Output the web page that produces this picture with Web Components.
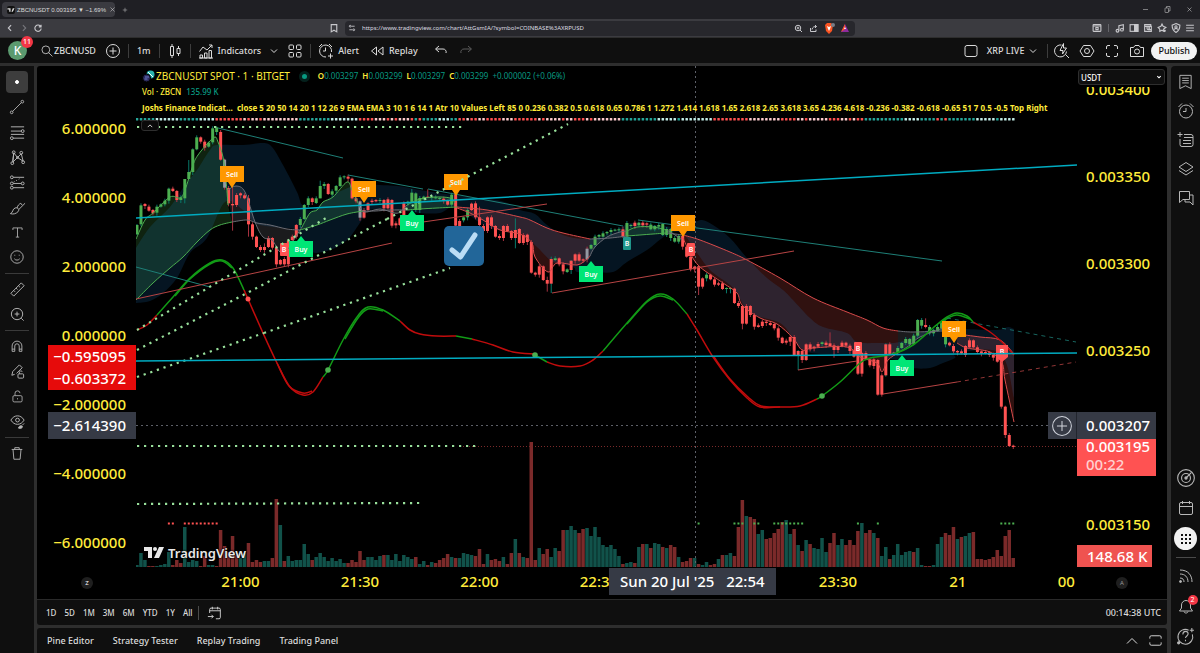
<!DOCTYPE html>
<html lang="en">
<head>
<meta charset="utf-8">
<title>ZBCNUSDT 0.003195 ▼ −1.69%</title>
<style>
	html, body {height: 100%;}
	body {
		margin: 0;
		overflow: hidden;
		background: #2e2e2e;
		color: #dbdbdb;
		font-family: "Noto Sans", "Open Sans", sans-serif;
		font-size: 9px;
	}
</style>
</head>
<body>
<trading-app>
	<browser-tabs slot="tabs"></browser-tabs>
	<address-bar slot="address"></address-bar>
	<chart-header slot="header"></chart-header>
	<tool-rail slot="tools"></tool-rail>
	<price-chart slot="chart">
		<chart-legend></chart-legend>
	</price-chart>
	<range-bar slot="ranges"></range-bar>
	<panel-bar slot="panels"></panel-bar>
	<side-rail slot="side"></side-rail>
</trading-app>

<script>
// every icon lives in an 18x18 box and is stroked with currentColor
const ICONS = {
	back: '<path d="M11 4L6 9l5 5"/>',
	forward: '<path d="M7 4l5 5-5 5"/>',
	reload: '<path d="M14 6.5A5.7 5.7 0 1 0 14.7 10M14.5 3v4h-4"/>',
	close: '<path d="M5 5l8 8M13 5l-8 8"/>',
	plus: '<path d="M9 4v10M4 9h10"/>',
	minimize: '<path d="M4 9h10"/>',
	restore: '<rect x="4" y="6" width="7" height="9" rx="1"/><path d="M7 6V3h7v9h-3"/>',
	bookmark: '<path d="M4 3h10v13l-5-3-5 3z"/>',
	tune: '<path d="M8 5h7M3 13h7"/><circle cx="5" cy="5" r="2"/><circle cx="13" cy="13" r="2"/>',
	zoom: '<circle cx="8" cy="8" r="5.5"/><path d="M12 12l4 4M8 5.5v5M5.500 8h5"/>',
	share: '<path d="M3 8v7h11v-4M6 11c1-5 4-6 9-6M12 2l3 3-3 3"/>',
	install: '<rect x="2" y="3" width="14" height="12" rx="1"/><path d="M2 5.500h14M7 8h4v4H7z"/>',
	note: '<circle cx="4.500" cy="14" r="2.500"/><circle cx="12.500" cy="12" r="2.500"/><path d="M7 14V5l8-2v9"/>',
	panel: '<rect x="2" y="3" width="14" height="12"/><path d="M10 3h6v12h-6z" fill="currentColor"/>',
	wallet: '<path d="M14 6V3H3v12h12v-3M3 6h12v6h-5a3 3 0 0 1 0-6"/><circle cx="11" cy="9" r=".8"/>',
	leo: '<path d="M9 2l2 4 5 2-4 3v4l-3-2-4 2v-4L2 8l5-2zM14 12v4M12 14h4"/>',
	shield: '<path d="M9 1l7 3c0 7-2 10-7 13C4 14 2 11 2 4z"/><circle cx="9" cy="7" r="2"/><path d="M6 12c1-3 5-3 6 0"/>',
	menu: '<path d="M2 4h14M2 9h14M2 14h14"/>',
	search: '<circle cx="7.500" cy="7.500" r="5"/><path d="M11 11l5 5"/>',
	addCircle: '<circle cx="9" cy="9" r="6.500"/><path d="M9 5.500v7M5.500 9h7"/>',
	candles: '<path d="M4.500 4.500h3v9h-3zM6 2v2.500M6 13.500V16M11 6.500h3v5h-3zM12.500 4v2.500M12.500 11.500V14"/>',
	indicators: '<path d="M3 16v-3h2.500v3zM7.500 16v-5H10v5zM12 16V8.500h2.500V16zM2 16h14M2.500 9.500L6 5l4 3 5-5M12 3h3v3"/>',
	chevron: '<path d="M6 7.500l3 3 3-3"/>',
	chevronUp: '<path d="M4 11.500l5-5 5 5"/>',
	grid: '<rect x="3" y="3" width="4.500" height="4.500" rx="1"/><rect x="10.500" y="3" width="4.500" height="4.500" rx="1"/><rect x="3" y="10.500" width="4.500" height="4.500" rx="1"/><rect x="10.500" y="10.500" width="4.500" height="4.500" rx="1"/>',
	alertAdd: '<path d="M14.500 10A6 6 0 1 0 9 15M8.500 5.500V9H6M2 5l3-3M12 2l3 3M13.500 11.500v5M11 14h5"/>',
	replay: '<path d="M8.500 5v8L3.500 9zM15 5v8L10 9z"/>',
	undo: '<path d="M7 4L3.500 7 7 10M4 7h7a3 3 0 0 1 3 4"/>',
	redo: '<path d="M11 4l3.500 3-3.500 3M14 7H7a3 3 0 0 0-3 4"/>',
	square: '<rect x="3" y="3.500" width="12" height="11" rx="2"/>',
	quick: '<path d="M8.500 3A6 6 0 1 0 13.500 9.500M12.500 12.500L16 16M10.500 1.500L7 8.500h3L9.500 12l4-6h-3z"/>',
	settings: '<path d="M5.500 3.500h7L16 9l-3.500 5.500h-7L2 9z"/><circle cx="9" cy="9" r="2.500"/>',
	fullscreen: '<path d="M3.500 7V5a1.500 1.500 0 0 1 1.500-1.500h2M11 3.500h2A1.500 1.500 0 0 1 14.500 5v2M14.500 11v2a1.500 1.500 0 0 1-1.500 1.500h-2M7 14.500H5A1.500 1.500 0 0 1 3.500 13v-2"/>',
	camera: '<path d="M2.500 5.500h3l1.500-2h4l1.500 2h3v9h-13z"/><circle cx="9" cy="9.500" r="2.500"/>',
	dot: '<circle cx="9" cy="9" r="1.500" fill="currentColor"/>',
	trend: '<path d="M4 14L14 4"/><circle cx="3" cy="15" r="1.500"/><circle cx="15" cy="3" r="1.500"/>',
	fib: '<path d="M2 3h14M2 7.500h11M2 11h14M4.500 15H16"/><circle cx="14.500" cy="7.500" r="1.500"/><circle cx="3" cy="15" r="1.500"/>',
	pattern: '<path d="M4 14L5 4l4 5 4-4 2 8-6-4-5 5M4 13L5 5"/><circle cx="3.500" cy="15" r="1.500"/><circle cx="5" cy="3.500" r="1.500"/><circle cx="9" cy="9" r="1"/><circle cx="13" cy="4" r="1.500"/><circle cx="15" cy="14" r="1.500"/>',
	forecast: '<path d="M4.500 3.500H16M4.500 10H13M4.500 14.500H16"/><path d="M5 8.500l8-4.500" stroke-dasharray="1 2"/><circle cx="3" cy="3.500" r="1.500"/><circle cx="3" cy="10" r="1.500"/><circle cx="3" cy="14.500" r="1.500"/><circle cx="14.500" cy="10" r="1.500"/>',
	brush: '<path d="M1.500 15.500c3-1 2-5 5-6 3-1 5 2 3 4s-5 3-8 2zM8.500 9.500c1-3 2-4 4-5M10.500 11l6.500-6.500M12.500 4.500l1.500 2"/>',
	text: '<path d="M3.500 6V3.500h11V6M9 3.500v11M7 14.500h4"/>',
	smile: '<circle cx="9" cy="9" r="7"/><path d="M6 11c1.500 2 4.500 2 6 0M6.500 6.500v1M11.500 6.500v1"/>',
	ruler: '<path d="M2 13L13 2l3 3L5 16zM5 10l1.500 1.500M7.500 7.500L9 9M10 5l1.500 1.500"/>',
	zoomIn: '<circle cx="8.500" cy="8.500" r="6"/><path d="M13 13l2.500 2.500M8.500 6v5M6 8.500h5"/>',
	magnet: '<path d="M3.500 15V9a5.500 5.500 0 0 1 11 0v6h-3V9a2.500 2.500 0 0 0-5 0v6zM3.500 12.500h3M11.500 12.500h3"/>',
	lockDraw: '<path d="M3 13l1-4 7-7 3 3-6 6M3 13l3-1"/><rect x="9.500" y="11.500" width="6" height="4.500" rx="1"/><path d="M11 11.500V10c0-2 3-2 3-.5"/>',
	lock: '<rect x="3.500" y="8" width="11" height="7.500" rx="1.500"/><path d="M6 8V5.500a3 3 0 0 1 6-.5M9 11v1.500"/>',
	eye: '<path d="M2 7.500c3.500-6 10.500-6 14 0-3.500 6-10.500 6-14 0z"/><circle cx="9" cy="7.500" r="2"/><path d="M10 16c1-3 3-3 4-2s-1 3-4 2zM14 13l2-2" fill="currentColor"/>',
	trash: '<path d="M3 5h12M6.500 5V3h5v2M4.500 5l1 11h7l1-11"/>',
	watchlist: '<path d="M3 2.500h12v14l-6-3-6 3zM5.500 5.500h7M5.500 8h7M5.500 10.500h7"/>',
	clock: '<circle cx="9" cy="9.500" r="6.500"/><path d="M9 6v3.500H6M1.500 5L5 1.500M13 1.500L16.500 5"/>',
	data: '<path d="M7 3.500h7a2 2 0 0 1 2 2v8a2 2 0 0 1-2 2H5a2 2 0 0 1-2-2V8M3 1v5M.5 3.500h5M7 6.500h9M6 9.500h8M6 12.500h8"/>',
	layers: '<path d="M9 2.500L16 7l-7 4.500L2 7zM2 10.500L9 15l7-4.500"/>',
	chat: '<path d="M2.500 2.500h10v8H6l-3.500 3zM12.500 6H16v10l-3-3H8v-2.500"/>',
	target: '<circle cx="9" cy="9" r="7.500"/><circle cx="9" cy="9" r="4"/><path d="M9 9l5-5"/><circle cx="9" cy="9" r="1" fill="currentColor"/>',
	calendar: '<rect x="2.500" y="3.500" width="13" height="12" rx="1.500"/><path d="M2.500 7.500h13M5.500 2v3M12.500 2v3"/>',
	apps: '<path d="M4 4h2v2H4zM8 4h2v2H8zM12 4h2v2h-2zM4 8h2v2H4zM8 8h2v2H8zM12 8h2v2h-2zM4 12h2v2H4zM8 12h2v2H8zM12 12h2v2h-2z" fill="currentColor" stroke="none"/>',
	feed: '<path d="M3 3c8 0 12 5 12 12M3 7c5 0 8 3 8 8M3 11c3 0 4 2 4 4"/><circle cx="3.500" cy="14.500" r="1" fill="currentColor"/>',
	bell: '<path d="M2.500 14l2-3V8a4.500 4.500 0 0 1 9 0v3l2 3zM7 14.500c0 2 4 2 4 0"/>',
	help: '<path d="M15.500 7A7 7 0 1 1 12 3M6.500 7c0-4 5-3.500 5-.5 0 2-2.500 2-2.500 4M9 12v1.500M15 1v4M13 3h4"/><circle cx="2.500" cy="15" r="1" fill="currentColor"/>',
	goto: '<path d="M3 9V5a1.500 1.500 0 0 1 1.500-1.500h9A1.500 1.500 0 0 1 15 5v9a1.500 1.500 0 0 1-1.500 1.500H10M3 6.500h12M6 2v3M12 2v3M1 13h6M5 11l2 2-2 2"/>',
	maximize: '<path d="M3 7V5.500A1.500 1.500 0 0 1 4.500 4h9A1.500 1.500 0 0 1 15 5.500V7M3 11v1.500A1.500 1.500 0 0 0 4.500 14h9a1.500 1.500 0 0 0 1.500-1.500V11"/>'
};

class AppIcon extends HTMLElement {
	constructor() {
		super();
		this.attachShadow({mode: 'open'});
	}
	connectedCallback() {
		const size = this.getAttribute('size') || 18;
		this.shadowRoot.innerHTML = `
			<style>
			:host {display: block; flex: none; line-height: 0;}
			svg {fill: none; stroke: currentColor; stroke-width: var(--icon-stroke, 1); overflow: visible;}
			</style>
			<svg width="${size}" height="${size}" viewBox="0 0 18 18" aria-hidden="true">${ICONS[this.getAttribute('name')]}</svg>
		`;
	}
}
customElements.define('app-icon', AppIcon);

const icon = (name, size) => `<app-icon name="${name}" size="${size || 18}"></app-icon>`;
const iconButton = (name, label, size, cls) =>
	`<button class="${cls || ''}" aria-label="${label}">${icon(name, size)}</button>`;

const buttonStyle = `
	button {
		display: flex;
		align-items: center;
		justify-content: center;
		padding: 0;
		border: 0;
		background: none;
		color: inherit;
		font: inherit;
		flex: none;
		white-space: nowrap;
	}
`;

// elements with nothing but static markup
function define(name, html) {
	const template = document.createElement('template');
	template.innerHTML = html;
	customElements.define(name, class extends HTMLElement {
		constructor() {
			super();
			this.attachShadow({mode: 'open'});
			this.shadowRoot.appendChild(template.content.cloneNode(true));
		}
	});
}

define('browser-tabs', `
	<style>
	${buttonStyle}
	:host {display: flex; align-items: center; height: 19px; padding: 0 4px 0 2px; background: #1f1f24; font-family: "Liberation Sans", sans-serif; font-size: 6px;}
	.tab {display: flex; align-items: center; gap: 2px; box-sizing: border-box; width: 113px; height: 15px; padding: 0 3px 0 5px; border-radius: 4px; background: #3a3a40;}
	.tab svg {width: 8px; height: 8px; background: #111; border-radius: 2px; flex: none;}
	.tab span {flex: 1; white-space: nowrap;}
	.new {margin-left: 6px;}
	.spacer {flex: 1;}
	.window {display: flex; gap: 13px; padding-right: 2px;}
	</style>
	<div class="tab">
		<svg viewBox="0 0 18 18" fill="#ddd"><path d="M1 5h7v8H5V8H1zM13 5h4l-4 8h-3z"/></svg>
		<span>ZBCNUSDT 0.003195 ▼ −1.69%</span>
		${iconButton('close', 'Close tab', 9)}
	</div>
	${iconButton('plus', 'New tab', 8, 'new')}
	<div class="spacer"></div>
	<div class="window">
		${iconButton('minimize', 'Minimize', 9)}
		${iconButton('restore', 'Restore', 9)}
		${iconButton('close', 'Close', 9)}
	</div>
`);

define('address-bar', `
	<style>
	${buttonStyle}
	:host {display: flex; align-items: center; height: 18px; padding: 0 5px; background: #3b3b40; color: #c8c8cc; --icon-stroke: 2;}
	.nav {display: flex; gap: 4px; flex: 1 1 0;}
	.nav button:nth-child(2) {color: #77777c;}
	.nav button:last-child {margin-left: auto; margin-right: 6px;}
	.field {display: flex; align-items: center; gap: 6px; box-sizing: border-box; flex: 1 1 170px; height: 15px; padding: 0 6px 0 3px; border-radius: 4px; background: #27272c;}
	input {flex: 1; min-width: 0; padding: 0; border: 0; background: none; color: #dcdce0; font: inherit; font-size: 6px;}
	.right {display: flex; align-items: center; justify-content: flex-end; gap: 4px; flex: 1 1 0;}
	i {width: 1px; height: 8px; background: #66666b; margin: 0 2px;}
	</style>
	<div class="nav">
		${iconButton('back', 'Back', 10)}${iconButton('forward', 'Forward', 10)}${iconButton('reload', 'Reload', 10)}${iconButton('bookmark', 'Bookmark', 10)}
	</div>
	<div class="field">
		${icon('tune', 8)}
		<input aria-label="Address" value="https://www.tradingview.com/chart/AttGsmIA/?symbol=COINBASE%3AXRPUSD">
		${iconButton('zoom', 'Zoom', 9)}
		${iconButton('share', 'Share', 9)}
		<svg width="11" height="11" viewBox="0 0 11 11" aria-hidden="true"><path d="M1 2l2-2h4l2 2-1 6-3 3-3-3z" fill="#fb5422"/><path d="M3 3l2 1 2-1-1 3-1 2-1-2z" fill="#fff"/><circle cx="9" cy="2" r="2" fill="#777c86"/></svg>
		<svg width="8" height="8" viewBox="0 0 8 8" aria-hidden="true"><path d="M4 0l4 8H0z" fill="#8e2b9d"/><path d="M4 0L0 8l4-3z" fill="#fb5422"/><path d="M4 3l1 2H3z" fill="#fff"/></svg>
	</div>
	<div class="right">
		${iconButton('install', 'Install app', 10)}<i></i>
		${iconButton('note', 'Media', 10)}${iconButton('panel', 'Sidebar', 10)}${iconButton('wallet', 'Wallet', 10)}${iconButton('leo', 'Assistant', 10)}${iconButton('shield', 'VPN', 10)}${iconButton('menu', 'Menu', 10)}
	</div>
`);

define('chart-header', `
	<style>
	${buttonStyle}
	:host {display: flex; align-items: center; height: 25px; padding: 0 3px 0 8px; background: #0f0f0f; font-weight: 500;}
	.avatar {position: relative; width: 19px; height: 19px; border-radius: 50%; background: #5b9a6f; color: #fff; font-size: 12px;}
	.badge {position: absolute; left: 13px; top: -5px; width: 12px; height: 12px; border-radius: 50%; background: #f23645; font-size: 7px; line-height: 12px; text-align: center;}
	.symbol {margin-left: 13px; min-width: 55px; justify-content: flex-start;}
	.add {margin-left: 8px;}
	i {width: 1px; height: 14px; background: #3d3d3d; margin: 0 6px; flex: none;}
	.group {display: flex; align-items: center;}
	.pad {margin: 0 2px;}
	.gap {gap: 3px;}
	.dim {color: #5d5d5d;}
	.more {gap: 3px; margin-left: 4px;}
	.replay {margin-left: 9px;}
	.undo {gap: 7px; margin-left: 14px;}
	.right {gap: 7px; margin-left: auto;}
	.right i {margin: 0 -2px;}
	.publish {height: 18px; padding: 0 7px; margin-left: -2px; border-radius: 9px; background: #f2f2f2; color: #0f0f0f;}
	</style>
	<button class="avatar" aria-label="Account">K<span class="badge">11</span></button>
	<button class="symbol">${icon('search', 14)}ZBCNUSD</button>
	${iconButton('addCircle', 'Compare', 18, 'add')}
	<i></i><button class="pad">1m</button><i></i>
	${iconButton('candles', 'Chart type')}
	<i></i>
	<button class="gap">${icon('indicators', 18)}Indicators</button>
	<div class="group more">${iconButton('chevron', 'Favourites', 18)}${iconButton('grid', 'Templates', 18)}</div>
	<i></i>
	<button class="gap">${icon('alertAdd', 18)}Alert</button>
	<button class="gap replay">${icon('replay', 18)}Replay</button>
	<div class="group undo">${iconButton('undo', 'Undo')}${iconButton('redo', 'Redo', 18, 'dim')}</div>
	<div class="group right">
		${iconButton('square', 'Layout')}<button>XRP LIVE${icon('chevron', 18)}</button><i></i>
		${iconButton('quick', 'Quick search')}${iconButton('settings', 'Settings')}${iconButton('fullscreen', 'Fullscreen')}${iconButton('camera', 'Snapshot')}
		<button class="publish">Publish</button>
	</div>
`);

define('tool-rail', `
	<style>
	${buttonStyle}
	:host {display: flex; flex-direction: column; align-items: center; box-sizing: border-box; width: 34px; padding-top: 5px; background: #0f0f0f; color: #b8b8b8;}
	button {width: 22px; height: 22px; margin-bottom: 3px; border-radius: 4px;}
	.active {background: #3d3d3d; color: #fff;}
	i {width: 24px; height: 1px; margin: 2px 0 4px; background: #3a3a3a;}
	</style>
	${iconButton('dot', 'Cursor', 18, 'active')}${iconButton('trend', 'Trend line', 16)}${iconButton('fib', 'Fib retracement', 17)}${iconButton('pattern', 'Patterns', 17)}${iconButton('forecast', 'Forecast', 17)}${iconButton('brush', 'Brush', 17)}${iconButton('text', 'Text', 15)}${iconButton('smile', 'Emoji', 16)}
	<i></i>
	${iconButton('ruler', 'Measure', 17)}${iconButton('zoomIn', 'Zoom in', 17)}
	<i></i>
	${iconButton('magnet', 'Magnet', 16)}${iconButton('lockDraw', 'Stay in drawing mode', 17)}${iconButton('lock', 'Lock drawings', 15)}${iconButton('eye', 'Hide drawings', 17)}
	<i></i>
	${iconButton('trash', 'Remove drawings', 16)}
`);

define('side-rail', `
	<style>
	${buttonStyle}
	:host {display: flex; flex-direction: column; align-items: center; box-sizing: border-box; width: 29px; padding: 1px 0 2px; background: #0f0f0f; color: #b8b8b8; border-radius: 4px 0 0 0;}
	button {position: relative; width: 24px; height: 29px;}
	.push, .push ~ button {height: 30px;}
	.push {margin-top: auto;}
	.push ~ .apps {height: 23px; width: 23px; margin: 4px 0; border-radius: 50%; background: #f2f2f2; color: #0f0f0f;}
	i {width: 20px; height: 1px; margin: 3px 0; background: #4a4a4a;}
	.badge {position: absolute; right: 0; top: 4px; width: 10px; height: 10px; border-radius: 50%; background: #f23645; color: #fff; font-size: 7px; line-height: 10px;}
	</style>
	${iconButton('watchlist', 'Watchlist', 17)}${iconButton('clock', 'Alerts')}${iconButton('data', 'Data window')}${iconButton('layers', 'Object tree')}${iconButton('chat', 'Chats')}
	${iconButton('target', 'Screener', 20, 'push')}${iconButton('calendar', 'Calendar')}${iconButton('apps', 'Products', 18, 'apps')}
	<i></i>
	${iconButton('feed', 'Ideas')}
	<button aria-label="Notifications">${icon('bell', 18)}<span class="badge">2</span></button>
	${iconButton('help', 'Help', 19)}
`);

define('range-bar', `
	<style>
	${buttonStyle}
	:host {display: flex; align-items: center; gap: 8px; height: 25px; padding: 0 6px 0 9px; border-top: 1px solid #2a2a2a; border-radius: 0 0 3px 3px; background: #0f0f0f; font-size: 8px; font-weight: 500;}
	i {width: 1px; height: 14px; background: #4a4a4a; margin-left: -2px;}
	.clock {margin-left: auto; font-size: 9px;}
	</style>
	<button>1D</button><button>5D</button><button>1M</button><button>3M</button><button>6M</button><button>YTD</button><button>1Y</button><button>All</button>
	<i></i>
	${iconButton('goto', 'Go to date', 16)}
	<button class="clock">00:14:38 UTC</button>
`);

define('panel-bar', `
	<style>
	${buttonStyle}
	:host {display: flex; align-items: center; gap: 19px; height: 25px; padding: 0 3px 0 10px; border-radius: 3px 3px 0 0; background: #0f0f0f; font-weight: 500;}
	.up {margin-left: auto;}
	.max {margin-left: -13px;}
	</style>
	<button>Pine Editor</button><button>Strategy Tester</button><button>Replay Trading</button><button>Trading Panel</button>
	${iconButton('chevronUp', 'Open panel', 18, 'up')}${iconButton('maximize', 'Maximize panel', 17, 'max')}
`);

define('chart-legend', `
	<style>
	:host {display: block; color: #ffeb3b; white-space: nowrap;}
	div {display: flex; align-items: center;}
	.title {font-size: 10px; line-height: 14px; height: 16px;}
	.title svg {margin-right: 1px;}
	.status {width: 5px; height: 5px; margin: 0 8px 0 9px; border: 3px solid #04201c; border-radius: 50%; background: #089981;}
	.ohlc {font-size: 8px; gap: 4px;}
	.ohlc b {font-weight: 600; color: #ffeb3b;}
	span {color: #089981;}
	.title .name {color: inherit;}
	.row {font-size: 8px; line-height: 16px; height: 16px; font-weight: 700; gap: 5px;}
	.row.vol {font-weight: 500;}
	</style>
	<div class="title">
		<svg width="13" height="13" viewBox="0 0 13 13" aria-hidden="true"><circle cx="8.500" cy="4.500" r="4" fill="#2bb5ae"/><path d="M6 2l5 5" stroke="#fff"/><circle cx="4.500" cy="8" r="4" fill="#2c2c5e" stroke="#000"/><path d="M3 7h4M2.500 9h3" stroke="#6f78c8"/></svg>
		<span class="name">ZBCNUSDT SPOT · 1 · BITGET</span>
		<div class="status"></div>
		<div class="ohlc">
			<span><b>O</b>0.003297</span><span><b>H</b>0.003299</span><span><b>L</b>0.003297</span><span><b>C</b>0.003299</span><span>+0.000002 (+0.06%)</span>
		</div>
	</div>
	<div class="row vol">Vol · ZBCN <span>135.99 K</span></div>
	<div class="row">Joshs Finance Indicat...&nbsp; close 5 20 50 14 20 1 12 26 9 EMA EMA 3 10 1 6 14 1 Atr 10 Values Left 85 0 0.236 0.382 0.5 0.618 0.65 0.786 1 1.272 1.414 1.618 1.65 2.618 2.65 3.618 3.65 4.236 4.618 -0.236 -0.382 -0.618 -0.65 51 7 0.5 -0.5 Top Right</div>
`);

define('trading-app', `
	<style>
	:host {display: flex; flex-direction: column; height: 100vh;}
	.header {margin-top: 1px;}
	main {display: flex; flex: 1; min-height: 0; gap: 3px; padding-top: 3px;}
	.center {display: flex; flex-direction: column; flex: 1; min-width: 0; margin-right: 1px;}
	.panels {margin-top: 3px;}
	::slotted(price-chart) {flex: 1; min-height: 0;}
	</style>
	<slot name="tabs"></slot>
	<slot name="address"></slot>
	<div class="header"><slot name="header"></slot></div>
	<main>
		<slot name="tools"></slot>
		<div class="center">
			<slot name="chart"></slot>
			<slot name="ranges"></slot>
			<div class="panels"><slot name="panels"></slot></div>
		</div>
		<slot name="side"></slot>
	</main>
`);

// top-bottom of each body in third-pixels below y=110, one per minute
// g up, r down, n neutral
const CANDLES = `345-373g 286-343g 282-288r 290-302r 300-310r 290-308g 283-290g 272-283g 236-272g 236-243r 243-270r 262-270g 207-265g 186-207g
118-186g 82-118g 82-95r 95-113r 98-110g 55-97g 52-66g 66-149r 149-233n 234-280r 282-286r 255-285r 250-256r 256-265r 265-343r 343-380r
380-411r 411-420r 411-420r 384-411r 384-413r 413-463r 450-463r 447-463r 392-463r 380-390r 345-380r 327-345g 285-327g 265-285g 265-276r
265-279g 228-265g 222-228g 222-252r 244-254g 228-242g 202-228g 199-202g 200-206r 206-265r 265-274r 274-323n 300-323r 280-300r 272-276r
270-274r 270-273g 270-295r 268-295r 270-347r 340-346r 325-345r 280-325r 275-280g 248-276g 250-300g 264-300g 260-268g 260-264r 260-263g
262-265g 264-266g 266-272r 272-284r 254-284g 250-347r 333-350r 322-331g 300-322g 281-300r 280-322r 322-345r 348-363r 322-363r 322-348r
348-380r 378-384r 348-384r 348-363r 363-384r 360-384r 357-399r 375-399r 374-396r 396-488r 488-494r 469-494r 469-510r 510-521r 447-521r
445-450g 445-463r 463-484r 478-486g 452-480r 433-452r 433-452r 448-452r 416-448n 405-416g 380-405g 375-380g 370-380g 366-370g 360-366g
359-361g 358-361g 358-380r 339-380g 345-348g 338-348r 338-346g 338-346r 340-344r 344-358g 348-358g 345-350g 342-375g 357-375g 357-384g
384-395g 378-395g 378-410r 410-440r 440-478r 470-478r 469-530r 505-530r 494-505g 494-508r 508-524r 520-524r 520-537r 534-537g 534-537g
536-579r 579-588r 588-641r 588-641r 588-615r 615-650r 646-651r 635-648r 635-639r 639-645r 642-655r 655-683r 683-699r 692-698r 681-695r
681-735r 723-736r 723-750r 703-750r 703-718r 710-715r 702-710r 697-702g 698-705r 700-708r 706-720r 709-720r 698-709r 698-707r 707-723r
720-740r 729-791r 729-791r 729-748r 748-766r 748-768r 750-854r 796-854r 703-796r 703-732r 728-732n 714-727g 699-714g 687-699g 687-703g
677-703g 630-677g 630-647g 645-651r 651-670g 660-670g 651-663g 635-655g 637-703g 698-706r 708-724r 723-727r 724-730r 708-735r 691-712r
691-712r 712-726r 724-730r 726-730r 727-735r 734-743r 738-755r 738-890r 890-975r 975-1008r 1007-1011r`.split(/\s+/);

// candles with a wick longer than usual: index -> [top, bottom]
const WICKS = {
	12: [207, 280], 13: [150, 207], 24: [230, 362], 28: [255, 380], 32: [400, 428], 46: [212, 265], 69: [237, 280], 73: [238, 264],
	86: [290, 360], 95: [325, 415], 103: [500, 545], 104: [440, 549], 109: [450, 492], 122: [350, 384], 141: [465, 555], 146: [515, 528],
	148: [532, 550], 149: [532, 550], 152: [586, 658], 156: [640, 653], 164: [675, 708], 166: [720, 780], 174: [667, 710], 175: [700, 743],
	181: [715, 795], 188: [700, 800], 198: [625, 655], 209: [685, 714]
};

// volume bar heights in pixels, t teal, r red
const VOLUME = `2t 14t 7t 1r 1r 1t 2t 3t 15t 2r 7r 4r 40t 5t 7t 6t 1r 11r 2t 2t 1r 37r 21r 15r 31r 12r 9t 14t 24r 5r 7r 5r 6t 6t 9r 68r 42t 6r
11t 6t 7t 7t 23t 13t 7r 10t 14t 10t 6t 9t 6t 8t 4t 4r 7r 5r 16r 7r 10t 10t 7t 11t 12r 12t 7t 13t 6t 12t 10t 8t 10r 3t 6t 2r 5t 4r 7r 9r
13r 10t 9r 9t 14t 13t 12t 11r 18r 3r 13t 7r 8r 6r 10t 3r 14r 28t 14r 10t 9r 125r 7r 19t 13r 18r 10t 19t 16r 37r 37t 41t 37t 34r 38r 39t
31t 40t 30t 22t 20t 22t 18t 11t 3r 4t 5t 4r 20t 23r 23t 19r 24t 23t 20r 19t 22r 20r 10t 5r 6r 9r 9t 3r 2t 5t 2r 3r 8t 12r 12t 14t 11r
40r 67r 51t 50r 48r 33t 37t 28r 29r 34r 38r 45r 47t 33t 38r 22t 16r 27t 23r 19t 18t 29t 15t 24r 34r 22t 28t 22r 27r 22r 36r 44t 34r 37r
34t 29r 11t 20t 8r 12t 23t 12t 15t 16t 15r 19t 2t 1r 1r 2t 23t 30t 34r 32r 40r 28t 30r 31t 34t 35r 8r 8r 7r 8r 10r 17r 11r 31r 37r 9r`.split(/\s+/);

// signal strip above the candles: t teal, w pale teal, r red, p pink
const SIGNALS = 't5w6t5w4r7p1r1p2r1p9t8w7r4p3r1p1r1p3r1t1r1t4w3t2r2p1r2p2r4p3r6p1r1p4r1p2r3p1r1p7t9w5t1w8r9p8r4p2r1p5r3p2r1p1r2t10w4t4r1t1r1t7w5t1w5r3p6r8';

const BLUE_CLOUD = [
	'136,248 150,227 170,207 185,185 197,170 210,150 217,145 243,145 263,143 272,147 283,165 297,192 302,205 312,210 330,197 343,190 360,185 397,186 420,190 453,195 490,199 507,203 520,210 535,214 547,225 563,235 583,239 600,237 620,228 630,223 653,225 682,227 695,222 702,220 713,225 730,238 747,258 767,278 783,290 793,300 810,318 823,327 847,333 857,342 877,343 900,342 920,333 937,328 967,329 997,330 1008,327 1014,329',
	'136,303 150,301 163,293 177,278 190,253 207,238 225,202 243,210 255,223 273,227 297,230 302,243 312,252 323,252 337,247 350,237 363,218 368,210 397,210 420,213 440,213 457,207 487,227 520,233 537,247 553,262 573,267 577,272 593,272 613,272 627,262 647,250 667,235 682,233 695,250 710,270 730,285 737,293 750,313 780,323 793,338 807,352 847,355 880,357 907,363 913,368 930,368 943,363 955,358 957,353 1000,353 1014,398'
];

// moving average ribbon: colour, fast edge, slow edge
const RIBBON = [
	['green', '136,239 145,220 153,213 170,197 180,198 185,190 193,165 198,155 208,143 215,137 218,142 223,157 226,180 228,205', '136,300 153,283 170,268 183,257 197,242 210,230 220,225 232,222'],
	['gray', '228,190 236,186 245,192 255,222 263,237 272,240 280,252 287,250 295,238 302,227', '232,222 247,220 257,223 270,225 287,229 300,230'],
	['green', '302,227 310,213 317,210 323,202 333,197 347,182 352,190 358,203', '300,230 317,225 330,220 347,214 363,211'],
	['gray', '358,203 364,212 380,209 394,213 400,212 407,205', '363,211 375,211 390,210 407,210'],
	['green', '407,205 420,199 435,197 450,198 455,203', '407,210 420,209 437,208 457,207'],
	['red', '457,208 470,213 483,220 500,230 520,234 532,243 535,257 548,272 557,263 577,265 587,259 590,256', '457,207 487,210 520,217 530,220 547,228 563,233 590,239'],
	['gray', '590,256 595,247 607,237 620,232 627,231', '590,239 610,238 627,236'],
	['green', '627,231 637,227 653,227 667,230', '627,236 653,234 667,233'],
	['gray', '667,230 675,235 682,240', '667,233 683,235'],
	['red', '683,238 690,253 700,267 723,283 737,293 742,305 760,318 777,324 793,338 802,350 813,348 847,347 860,357 877,363 882,372 888,360 898,353', '683,235 700,240 730,252 747,260 780,278 813,298 847,312 867,320 883,328 898,331'],
	['gray', '898,353 910,345 920,337 943,328', '898,331 913,332 943,331'],
	['red', '957,343 967,348 990,352 1002,363 1005,380 1014,422', '957,334 980,337 1000,340 1014,354']
];

// momentum wave, split where it changes colour
const WAVE = [
	['r', '137,330 147,325 157,315'],
	['g', '157,315 173,297 190,278 210,263 222,260 233,268 244,290'],
	['r', '244,290 248,299 263,333 277,363 290,387 303,395 313,392 323,377'],
	['g', '323,377 328,370 343,340 357,317 368,307 383,310 400,321'],
	['r', '400,321 410,330 420,334 437,336 456,336'],
	['g', '456,336 472,339'],
	['r', '472,339 493,345 513,352 535,354'],
	['g', '535,355 547,362'],
	['r', '547,362 560,366 580,366 593,360 603,351'],
	['g', '603,351 627,323 647,301 660,294 673,299 687,314'],
	['r', '687,314 697,330 713,357 730,380 747,398 760,407 780,407 800,406 817,399'],
	['g', '817,399 822,396 840,382 860,363 870,358 893,354 913,345 933,328 947,317 957,313 967,316 973,322'],
	['r', '973,322 990,332 1003,343 1014,355']
];

// the crest of each swing is drawn a second time, a little inside
const CRESTS = [
	['g', '175,296 190,279 210,264 222,261 232,268'],
	['r', '277,363 289,386 303,393 312,391'],
	['g', '345,339 358,318 368,309 383,311'],
	['g', '627,324 647,302 660,296 673,300'],
	['r', '714,357 730,379 748,397 761,406 780,407'],
	['g', '940,323 948,318 957,315 970,319']
];

const LINES = [
	['teal', 218, 128, 343, 158], ['teal', 348, 175, 423, 189], ['teal', 428, 189, 623, 226], ['teal', 638, 220, 942, 261], ['teal', 136, 267, 210, 287],
	['red', 136, 299, 392, 243], ['red', 423, 222, 547, 204], ['red', 552, 293, 794, 251], ['red', 798, 370, 857, 361], ['red', 883, 394, 957, 382],
	['red dash', 957, 382, 1076, 362], ['teal dash', 947, 318, 1076, 342]
];
const DOTTED = [
	['dots', 137, 127, 463, 127], ['dots', 137, 330, 326, 218], ['dots', 137, 350, 249, 292], ['dots', 249, 292, 387, 219], ['dots', 387, 219, 568, 124],
	['dots', 137, 377, 264, 333], ['dots', 264, 333, 450, 268], ['dots', 137, 446, 477, 446], ['dots', 137, 504, 421, 503]
];
const CHANNELS = [['cyan', 136, 218, 1077, 165], ['cyan', 136, 361, 1077, 353]];

const STEP = 3.983;
const barX = i => 137 + i * STEP;
const toPoints = str => str.split(' ').map(p => p.split(',').map(Number));

function smooth(str) {
	const p = toPoints(str);
	let d = `M${p[0]}`;
	for (let i = 0; i < p.length - 1; i++) {
		const a = p[i - 1] || p[i], b = p[i], c = p[i + 1], e = p[i + 2] || c;
		d += `C${b[0] + (c[0] - a[0]) / 6},${b[1] + (c[1] - a[1]) / 6} ${c[0] - (e[0] - b[0]) / 6},${c[1] - (e[1] - b[1]) / 6} ${c}`;
	}
	return d;
}

function area(top, bottom) {
	const back = bottom.split(' ').reverse().join(' ');
	return smooth(top) + smooth(back).replace('M', 'L') + 'Z';
}

const line = ([cls, x1, y1, x2, y2]) => `<line class="${cls}" x1="${x1}" y1="${y1}" x2="${x2}" y2="${y2}"/>`;

function drawVolume() {
	return VOLUME.map((v, i) => {
		const h = parseInt(v);
		return `<rect class="vol-${v.slice(-1)}" x="${barX(i) - 1.8}" y="${567 - h}" width="3.500" height="${h}"/>`;
	}).join('');
}

function drawCandles() {
	return CANDLES.map((c, i) => {
		const [top, bottom] = c.slice(0, -1).split('-').map(v => 110 + v / 3);
		const kind = c.slice(-1);
		const wick = WICKS[i] ? WICKS[i].map(v => 110 + v / 3) : [top - 1 - i % 2, bottom + 1 + i * 7 % 3];
		const x = barX(i);
		const teal = kind === 'g' || [95, 104, 109, 148, 149, 166, 188].includes(i);
		return `<line class="${teal ? 'wick-g' : 'wick-r'}" x1="${x}" y1="${wick[0]}" x2="${x}" y2="${wick[1]}"/>` +
			`<rect class="body-${kind}" x="${x - 1.5}" y="${top}" width="3" height="${Math.max(1, bottom - top)}"/>`;
	}).join('');
}

function drawSignals() {
	const kinds = SIGNALS.match(/[a-z]\d+/g).map(r => r[0].repeat(r.slice(1))).join('').slice(0, 221);
	return [...kinds].map((k, i) => `<rect class="sig-${k}" x="${barX(i) - 1.2}" y="118" width="2.500" height="2.500" rx=".5"/>`).join('');
}

function drawTicks() {
	const tick = (i, cls) => `<rect class="${cls}" x="${barX(i) - 1}" y="522.500" width="2" height="2"/>`;
	return [8, 9, 12, 13, 14, 15, 16, 17, 18, 19, 20].map(i => tick(i, 'tick-r')).join('') +
		[141, 150, 151, 152, 155, 156, 160, 161, 162, 163, 164, 165, 166, 167, 181, 186, 217, 218, 219, 220].map(i => tick(i, 'tick-g')).join('');
}

const sell = (x, y) => `<path fill="#ff9800" d="M${x - 12},${y}h24v16h-8l-4,6l-4,-6h-8z"/><text x="${x}" y="${y + 11}">Sell</text>`;
const buy = (x, y) => `<path fill="#00e676" d="M${x - 12},${y}h8l4,-5l4,5h8v16h-24z"/><text x="${x}" y="${y + 11}">Buy</text>`;
const bos = (x, y, fill) => `<rect fill="${fill}" x="${x - 4}" y="${y}" width="8" height="13" rx="1"/><text x="${x}" y="${y + 9}">B</text>`;

class PriceChart extends HTMLElement {
	constructor() {
		super();
		this.attachShadow({mode: 'open'});
	}

	connectedCallback() {
		// an empty entry is a tick whose label gives way to a crosshair tag
		const left = ['6.000000', '4.000000', '2.000000', '0.000000', '−2.000000', '−4.000000', '−6.000000'];
		const right = ['0.003400', '0.003350', '0.003300', '0.003250', '', '0.003150'];
		const times = ['21:00', '21:30', '22:00', '22:3', '', '23:30', '21', '00'];
		const spans = list => list.map(t => `<span>${t}</span>`).join('');

		this.shadowRoot.innerHTML = `
			<style>
			:host {
				position: relative;
				display: grid;
				grid-template: minmax(0, 1fr) 32px / 99px minmax(0, 1fr) 90px;
				background: #000;
				color: #ffeb3b;
				font-size: 15px;
				font-weight: 500;
				border-radius: 3px 3px 0 0;
			}
			.left {grid-row: 1 / 3; display: flex; flex-direction: column; padding: 27px 10px 23px 0; text-align: right;}
			.right {display: flex; flex-direction: column; height: calc(100% + 20px); margin-top: -20px; padding-left: 9px;}
			.left span, .right span {flex: 1 1 0; display: flex; align-items: center;}
			.left span {justify-content: flex-end;}
			.pane {position: relative; min-width: 0;}
			.pane > svg {display: block; width: 100%; height: 100%; position: absolute;}
			.clip {overflow: hidden;}
			.times {overflow: hidden; grid-column: 2;}
			.times div {display: grid; grid-template-columns: repeat(8, 1fr); margin: 0 -60px 0 45px; line-height: 28px;}
			.times span {justify-self: center; width: 39px; text-align: left;}
			.times span:nth-child(7) {width: 17px;}
			.mode {align-self: center; justify-self: center;}
			.round {display: block; width: 12px; height: 12px; padding: 0; border: 0; border-radius: 50%; background: #1f1f1f; color: #999; font: 6px "Noto Sans", sans-serif; line-height: 12px;}
			.overlay {position: absolute; box-sizing: border-box; color: #fff;}
			.values {left: 11px; top: 279px; width: 88px; padding: 0 10px 1px 0; background: #e60b0b; line-height: 22px; text-align: right;}
			.cross-left {left: 11px; top: 346px; width: 88px; padding-right: 10px; background: #363a45; line-height: 27px; text-align: right;}
			.cross-right {right: 11px; top: 346px; display: flex; align-items: center; width: 108px; background: #363a45; line-height: 27px;}
			.cross-right button {display: flex; width: 29px; height: 27px; padding: 0; border: 0; border-right: 1px solid #22252d; margin-right: 9px; background: none; color: #d1d4dc; align-items: center; justify-content: center; --icon-stroke: .7;}
			.last {right: 11px; top: 373px; width: 79px; height: 37px; padding-left: 9px; background: #ff5252; line-height: 18px;}
			.last div:first-child {margin-top: -2px;}
			.last div + div {color: #ffd0d0;}
			.vol {right: 15px; bottom: 32px; width: 75px; padding-left: 10px; background: #ef5350; line-height: 22px;}
			.when {left: 572px; bottom: 4px; padding: 0 11px; background: #363a45; line-height: 27px; white-space: pre;}
			select {right: 2px; top: 3px; width: 87px; height: 16px; padding: 0 0 0 2px; border: 1px solid #2e2e2e; border-radius: 3px; background: #0f0f0f; color: #dbdbdb; font: 500 8px "Noto Sans", sans-serif; appearance: none; box-shadow: 0 0 0 2px #000;}
			.arrow {right: 3px; top: 6px; pointer-events: none; --icon-stroke: 2;}
			slot {position: absolute; display: block; left: 105px; top: 2px; font-weight: 400;}
			.collapse {left: 104px; top: 54px; width: 18px; height: 11px; padding: 0 4px; border: 1px solid #2e2e2e; border-radius: 3px; background: #0a0a0a; color: #ddd; --icon-stroke: 2;}
			.logo {left: 107px; bottom: 36px; display: flex; align-items: center; gap: 4px; color: #e8e8e8; font-size: 13px; font-weight: 600; line-height: 20px; text-shadow: 0 0 2px #000, 0 0 2px #000;}

			.body-g {fill: #4caf50;} .body-r {fill: #ff5252;} .body-n {fill: #9598a1;}
			.wick-g {stroke: #08796a;} .wick-r {stroke: #a83240;}
			.vol-t {fill: #11524a;} .vol-r {fill: #7b2a2a;}
			.sig-t {fill: #26a69a;} .sig-w {fill: #c2ece7;} .sig-r {fill: #ff5252;} .sig-p {fill: #fccbcd;}
			.tick-r {fill: #ff5252;} .tick-g {fill: #4caf50;}
			.cyan {stroke: #00acc1; stroke-width: 1.500;}
			.teal {stroke: #1e7f77;} .red {stroke: #b74444;}
			.dash {stroke-dasharray: 4 4; opacity: .8;}
			.dots {stroke: #98e09b; stroke-width: 2.200; stroke-dasharray: 2.200 4.800;}
			.cross {stroke: #5d6068; stroke-dasharray: 2 3;}
			.wave-g {stroke: #129b16;} .wave-r {stroke: #c00c0c;}
			.waves path {fill: none; stroke-width: 1.500;}
			.fill-green {fill: #4caf50; fill-opacity: .2;} .fill-red {fill: #ef5350; fill-opacity: .2;} .fill-gray {fill: #9598a1; fill-opacity: .18;}
			.edge-green {stroke: #4caf50;} .edge-red {stroke: #d94b4b;} .edge-gray {stroke: #6b6d75;}
			.edges path {fill: none;}
			.marks text {fill: #fff; font: 600 7px "Noto Sans", sans-serif; text-anchor: middle;}
			</style>
			<div class="left">${spans(left)}</div>
			<div class="pane">
				<svg viewBox="136 66 941 501" preserveAspectRatio="xMinYMin meet">
					${RIBBON.map(r => `<path class="fill-${r[0]}" d="${area(r[1], r[2])}"/>`).join('')}
					<path d="${area(BLUE_CLOUD[0], BLUE_CLOUD[1])}" fill="#2196f3" fill-opacity=".14"/>
					${drawVolume()}
					${drawTicks()}
					<line class="cross" x1="695.5" y1="66" x2="695.5" y2="568"/>
					<line class="cross" x1="136" y1="425.5" x2="1077" y2="425.5"/>
					<line x1="463" y1="446.5" x2="1077" y2="446.5" stroke="#7a2a2a" stroke-dasharray="1 2"/>
					${drawCandles()}
					<g class="edges">${RIBBON.map(r => `<path class="edge-${r[0]}" d="${smooth(r[1])}"/><path class="edge-${r[0]}" d="${smooth(r[2])}"/>`).join('')}</g>
					<g class="waves">${WAVE.concat(CRESTS).map(w => `<path class="wave-${w[0]}" d="${smooth(w[1])}"/>`).join('')}</g>
					<circle cx="248" cy="299" r="2.500" fill="#ff5252"/>
					<circle cx="328" cy="370" r="2.800" fill="#4caf50"/><circle cx="535" cy="355" r="2.800" fill="#4caf50"/><circle cx="822" cy="396" r="2.800" fill="#4caf50"/>
					${drawSignals()}
					${LINES.map(line).join('')}
					<g class="marks">
						${bos(284, 243, '#ff5252')}${bos(627, 237, '#1f968b')}${bos(691, 243, '#ff5252')}${bos(858, 342, '#ff5252')}
						<path d="M996,345h12v12l-6,5l-6,-5z" fill="#ff5252"/><text x="1002" y="354">B</text>
						${sell(232, 166)}${sell(364, 181)}${sell(456, 174)}${sell(683, 215)}${sell(954, 321)}
						${buy(301, 241)}${buy(412, 215)}${buy(591, 266)}${buy(902, 360)}
					</g>
					${DOTTED.map(line).join('')}
					${CHANNELS.map(line).join('')}
					<rect x="444" y="226" width="40" height="40" rx="5" fill="#226699"/>
					<path d="M452 250l8.500 7L475 235" fill="none" stroke="#bbddf5" stroke-width="5" stroke-linecap="round" stroke-linejoin="round"/>
				</svg>
			</div>
			<div class="clip"><div class="right">${spans(right)}</div></div>
			<div class="times"><div>${spans(times)}</div></div>
			<div class="mode"><button class="round" aria-label="Auto scale">A</button></div>

			<slot></slot>
			<button class="overlay collapse" aria-label="Hide legend">${icon('chevronUp', 8)}</button>
			<div class="overlay logo">
				<svg width="20" height="12" viewBox="0 0 20 12" fill="#e8e8e8" aria-hidden="true"><path d="M0 0h8v11H4V4H0z"/><circle cx="11" cy="2" r="2"/><path d="M15 0h5l-5 11h-5z"/></svg>
				TradingView
			</div>
			<button class="overlay round" style="left: 44px; bottom: 10px" aria-label="Left scale mode">Z</button>
			<div class="overlay values">−0.595095<br>−0.603372</div>
			<div class="overlay cross-left">−2.614390</div>
			<div class="overlay cross-right"><button aria-label="Add alert">${icon('addCircle', 26)}</button>0.003207</div>
			<div class="overlay last"><div>0.003195</div><div>00:22</div></div>
			<div class="overlay vol">148.68 K</div>
			<div class="overlay when">Sun 20 Jul '25   22:54</div>
			<select class="overlay" aria-label="Currency"><option>USDT</option></select>
			<div class="overlay arrow">${icon('chevron', 10)}</div>
		`;
	}
}
customElements.define('price-chart', PriceChart);
</script>
</body>
</html>
